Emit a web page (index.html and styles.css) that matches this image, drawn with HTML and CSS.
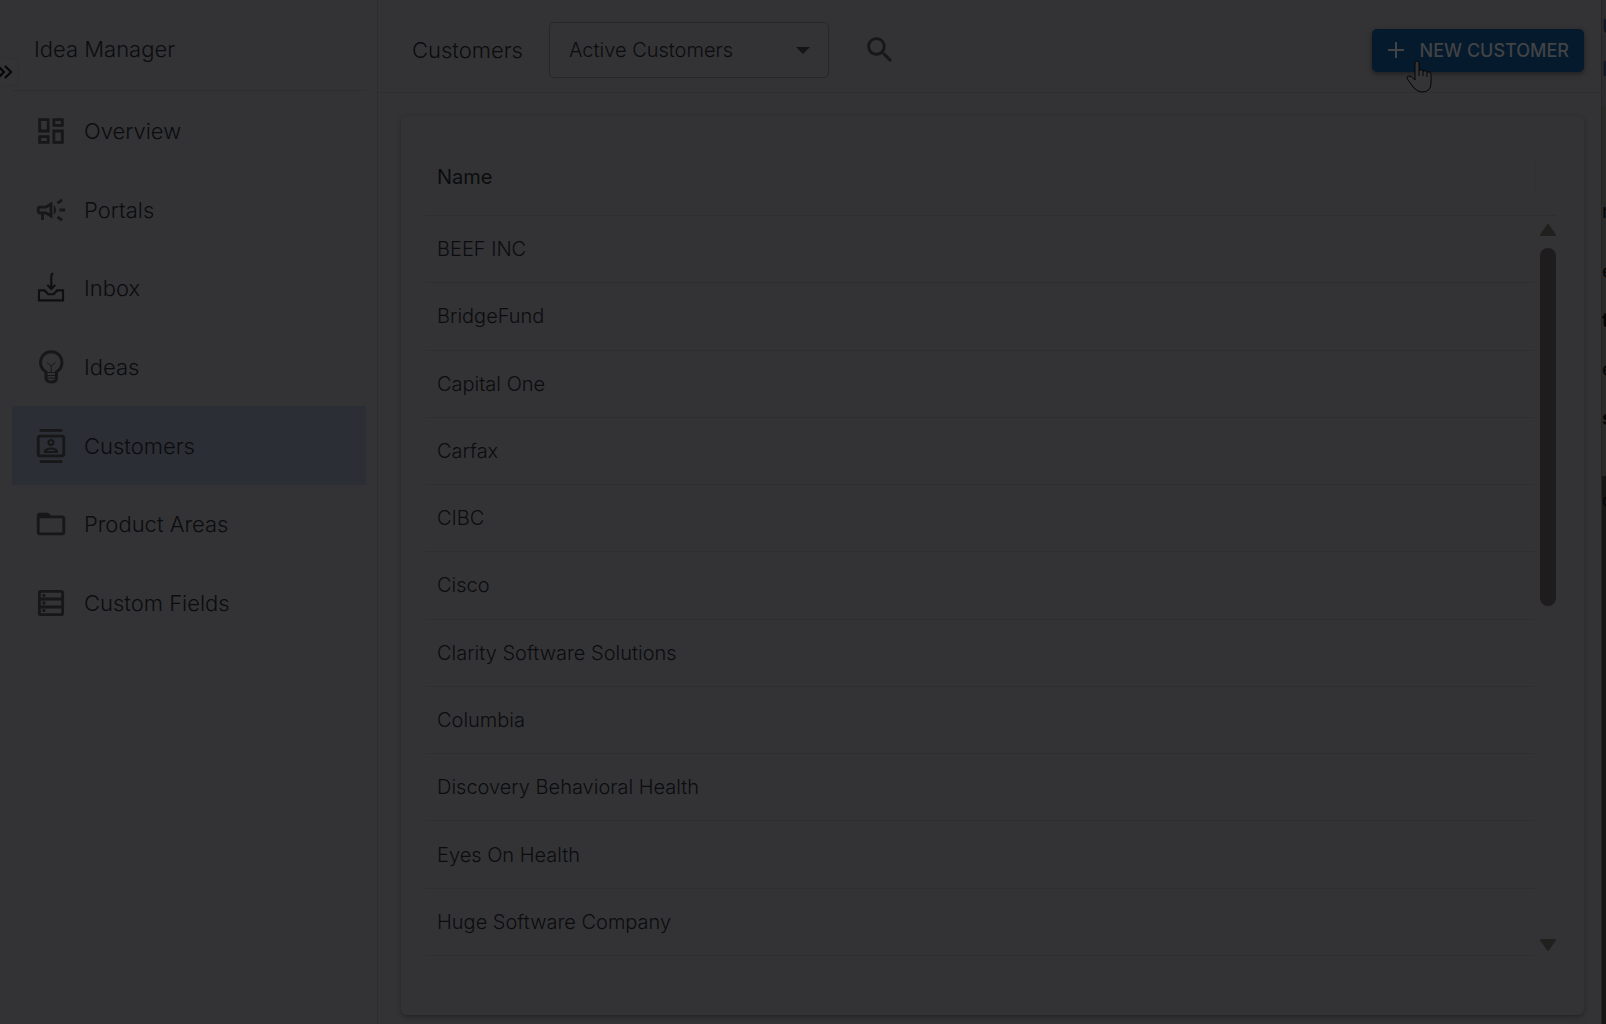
FILE: index.html
```html
<!DOCTYPE html>
<html lang="en">
<head>
<meta charset="utf-8">
<title>Idea Manager - Customers</title>
<link rel="stylesheet" href="styles.css">
</head>
<body>
<div class="app">
  <aside class="sidebar">
    <h1 class="sidebar-title">Idea Manager</h1>
    <button class="expand" aria-label="Expand menu">
      <svg width="18" height="18" viewBox="0 0 18 18"><path d="M-1 3l6 6-6 6M6 3l6 6-6 6"/></svg>
    </button>
    <nav class="nav">
      <a class="nav-item" href="#"><svg class="icon" viewBox="0 0 24 24"><path d="M19 5v2h-4V5h4M9 5v6H5V5h4m10 8v6h-4v-6h4M9 17v2H5v-2h4M21 3h-8v6h8V3zM11 3H3v10h8V3zm10 8h-8v10h8V11zm-10 4H3v6h8v-6z"/></svg>Overview</a>
      <a class="nav-item" href="#"><svg class="icon" viewBox="0 0 24 24"><path d="M18 11v2h4v-2h-4zm-2 6.610c.96.71 2.210 1.650 3.200 2.390.4-.53.8-1.070 1.200-1.600-.99-.74-2.240-1.680-3.200-2.400-.4.540-.8 1.080-1.200 1.610zM20.400 5.600c-.4-.53-.8-1.070-1.200-1.600-.99.740-2.240 1.680-3.200 2.400.4.530.8 1.070 1.200 1.600.96-.72 2.210-1.650 3.200-2.400zM4 9c-1.100 0-2 .9-2 2v2c0 1.100.9 2 2 2h1v4h2v-4h1l5 3V6L8 9H4zm5.030 1.710L11 9.530v4.940l-1.970-1.180-.48-.29H4v-2h4.550l.48-.29zM15.500 12c0-1.330-.58-2.530-1.500-3.350v6.690c.92-.81 1.500-2.010 1.500-3.340z"/></svg>Portals</a>
      <a class="nav-item" href="#"><svg class="icon icon-line" viewBox="0 0 24 24"><path d="M13.600 1.800q-1.400.3-1.400 2V12M9.400 9.800l2.800 2.900 2.800-2.900M3.500 13.700h4l2.500 2.700h3.800l2.500-2.700h4.200v7h-17z"/></svg>Inbox</a>
      <a class="nav-item" href="#"><svg class="icon icon-bulb" viewBox="0 0 34 34"><path class="thick" d="M12 25v-3.200a10.700 10.700 0 1 1 10.500 0V28q0 4-5.200 4T12 28z"/><path d="M12 22.500h10.500M13 25.500h8M13 28h8M13 12.500l4.200 3.500 4.200-3.500M17.200 16v6"/></svg>Ideas</a>
      <a class="nav-item active" href="#"><svg class="icon" viewBox="0 0 24 24"><path d="M20 4H4c-1.100 0-2 .9-2 2v12c0 1.100.9 2 2 2h16c1.100 0 2-.9 2-2V6c0-1.100-.9-2-2-2zm0 14H4V6h16v12zM4 0h16v2H4zm0 22h16v2H4zm8-10a2.500 2.500 0 0 0 0-5 2.500 2.500 0 0 0 0 5zm0-3.500c.55 0 1 .45 1 1s-.45 1-1 1-1-.45-1-1 .45-1 1-1zm5 7.490C17 13.900 13.690 13 12 13s-5 .9-5 2.990V17h10v-1.010zm-8.190-.49c.61-.52 2.030-1 3.190-1 1.170 0 2.590.48 3.200 1H8.810z"/></svg>Customers</a>
      <a class="nav-item" href="#"><svg class="icon" viewBox="0 0 24 24"><path d="M20 6h-8l-2-2H4c-1.100 0-1.990.9-1.990 2L2 18c0 1.100.9 2 2 2h16c1.100 0 2-.9 2-2V8c0-1.100-.9-2-2-2zm0 12H4V8h16v10z"/></svg>Product Areas</a>
      <a class="nav-item" href="#"><svg class="icon icon-list" viewBox="0 0 24 24"><rect x="3.800" y="3.800" width="16.400" height="16.400" rx="1"/><path d="M4 9.200h16M4 14.800h16M6 6.600h2M6 12h2M6 17.400h2"/></svg>Custom Fields</a>
    </nav>
  </aside>
  <main class="main">
    <header class="topbar">
      <h2 class="page-title">Customers</h2>
      <div class="select-wrap">
        <select class="filter" aria-label="Customer filter"><option>Active Customers</option></select>
        <svg class="caret" width="14" height="7" viewBox="0 0 14 7"><path d="M0 0h14L7 7z"/></svg>
      </div>
      <button class="search" aria-label="Search"><svg class="icon-search" viewBox="0 0 24 24"><path d="M15.500 14h-.79l-.28-.27C15.410 12.590 16 11.110 16 9.500 16 5.910 13.090 3 9.500 3S3 5.910 3 9.500 5.910 16 9.500 16c1.610 0 3.090-.59 4.230-1.570l.27.28v.79l5 4.990L20.490 19l-4.990-5zm-6 0C7.010 14 5 11.990 5 9.500S7.010 5 9.500 5 14 7.010 14 9.500 11.990 14 9.500 14z"/></svg></button>
      <button class="new-customer"><svg width="16" height="16" viewBox="0 0 16 16"><path d="M8 0v16M0 8h16"/></svg>NEW CUSTOMER
        <svg class="pointer" width="26" height="33" viewBox="0 0 26 33"><path d="M9 20V3q0-2 2-2t2 2v7q4-1 4 1 4-1 4 1 4-1 4 2v9q0 9-9 9-4 0-8-4l-6-8q-2-3 0-4 3-1 7 4M13 10v6M17 11v5M21 12v5"/></svg>
      </button>
    </header>
    <section class="card">
      <table class="customers">
        <thead><tr><th scope="col">Name</th></tr></thead>
        <tbody>
          <tr><td>BEEF INC</td></tr>
          <tr><td>BridgeFund</td></tr>
          <tr><td>Capital One</td></tr>
          <tr><td>Carfax</td></tr>
          <tr><td>CIBC</td></tr>
          <tr><td>Cisco</td></tr>
          <tr><td>Clarity Software Solutions</td></tr>
          <tr><td>Columbia</td></tr>
          <tr><td>Discovery Behavioral Health</td></tr>
          <tr><td>Eyes On Health</td></tr>
          <tr><td>Huge Software Company</td></tr>
        </tbody>
      </table>
      <div class="rail">
        <div class="rail-head"><div class="separator"></div></div>
        <div class="scrollbar">
          <svg width="16" height="12" viewBox="0 0 16 12"><path d="M8 1l7 10H1z"/></svg>
          <div class="thumb"></div>
          <svg class="down" width="16" height="12" viewBox="0 0 16 12"><path d="M8 11L1 1h14z"/></svg>
        </div>
      </div>
    </section>
  </main>
  <div class="behind">
    <div class="behind-head"><span>U</span><span>I</span></div>
    <div class="behind-page"><span>n</span><span>e</span><b>t</b><span>e</span><b>s</b></div>
    <div class="behind-foot"><span>c</span></div>
  </div>
</div>
</body>
</html>
```
FILE: styles.css
```css
* { box-sizing: border-box; }
body {
  margin: 0;
  background: #333335;
  color: #0b0c0e;
  font-family: Inter, "Liberation Sans", sans-serif;
  font-optical-sizing: none;
  font-weight: 300;
  font-size: 20px;
}
button, select { font: inherit; color: inherit; }
.app { display: flex; min-height: 100vh; overflow: hidden; }
.sidebar {
  position: relative;
  flex: none;
  width: 378px;
  padding: 0 11px 0 12px;
  border-right: 1px solid #2d2d2f;
}
.sidebar-title {
  height: 91px;
  margin: 0;
  padding: 35px 22px 0;
  border-bottom: 1px solid #2e2e2f;
  font-size: 22px;
  line-height: 28px;
  font-weight: 300;
}
.expand {
  position: absolute;
  left: -8px;
  top: 57px;
  width: 27px;
  height: 30px;
  padding: 0 0 0 6px;
  border: 1px solid #303031;
  border-radius: 8px;
  background: #333335;
}
.expand svg { display: block; fill: none; stroke: #050505; stroke-width: 2; }
.nav { display: grid; grid-template-rows: repeat(7, 1fr); height: 551px; padding-top: 1px; }
.nav-item {
  display: flex;
  align-items: center;
  gap: 16px;
  padding-left: 22px;
  color: inherit;
  font-size: 22px;
  text-decoration: none;
}
.nav-item.active { background: #2b2e35; }
.icon { flex: none; width: 34px; height: 34px; fill: #171718; }
.icon-line { fill: none; stroke: #0f0f10; stroke-width: 1.500; }
.icon-list { fill: none; stroke: #171718; stroke-width: 2; }
.icon-bulb { fill: none; stroke: #171718; stroke-width: 1; overflow: visible; }
.icon-bulb .thick { stroke-width: 3; }
.main { flex: 1; min-width: 0; display: flex; flex-direction: column; }
.topbar {
  display: flex;
  align-items: center;
  height: 93px;
  padding: 8px 17px 0 34px;
  border-bottom: 1px solid #2e2e2e;
}
.page-title { width: 114px; margin: 0 23px 0 0; font-size: 22px; font-weight: 300; }
.select-wrap { display: flex; align-items: center; width: 280px; position: relative; }
.filter {
  width: 100%;
  height: 56px;
  padding: 0 19px;
  border: 1px solid #272729;
  border-radius: 5px;
  background: transparent;
  appearance: none;
}
.caret { position: absolute; right: 19px; fill: #141415; }
.search { margin-left: 34px; padding: 0; border: 0; background: none; }
.icon-search { display: block; width: 34px; height: 34px; fill: #171718; }
.new-customer {
  position: relative;
  display: flex;
  align-items: center;
  gap: 16px;
  height: 43px;
  margin-left: auto;
  padding: 0 15px 0 16px;
  border: 0;
  border-radius: 5px;
  background: #061a2d;
  box-shadow: 0 2px 5px #202021;
  color: #414345;
  font-size: 18px;
  font-weight: 500;
}
.new-customer svg { fill: none; stroke: #414345; stroke-width: 2; }
.new-customer .pointer { position: absolute; left: 34px; top: 31px; fill: #343436; stroke: #050505; stroke-width: 1; }
.card {
  flex: 1;
  display: flex;
  margin: 23px 17px 9px 23px;
  padding: 0 28px 59px 25px;
  border-radius: 6px;
  box-shadow: 0 2px 4px #252525;
}
.customers { flex: 1; border-collapse: separate; border-spacing: 0; height: 840px; }
.customers th, .customers td {
  padding: 0 11px;
  border-bottom: 1px solid #2e2e2f;
  text-align: left;
  vertical-align: middle;
}
.customers th { height: 100px; padding-top: 22px; font-weight: 400; }
.rail { display: flex; flex-direction: column; width: 22px; }
.rail-head { height: 100px; padding-top: 44px; border-bottom: 1px solid #2e2e2f; }
.separator { width: 1px; height: 32px; background: #2f2f30; }
.scrollbar { flex: 1; display: flex; flex-direction: column; align-items: flex-end; padding: 8px 0 5px; }
.scrollbar svg { fill: #20201f; stroke: #20201f; stroke-width: 2; stroke-linejoin: round; }
.thumb { width: 16px; height: 358px; margin-top: 12px; border-radius: 8px; background: #1f1c1d; }
.down { margin-top: auto; }
.behind {
  flex: none;
  display: flex;
  flex-direction: column;
  width: 5px;
  overflow: hidden;
  border-left: 1px solid #262526;
  color: #060606;
  font-weight: 400;
}
.behind span, .behind b { display: block; line-height: 49px; }
.behind-head { height: 106px; padding-top: 6px; background: #2f2c30; color: #0d1524; }
.behind-head span { line-height: 42px; }
.behind-page { height: 370px; padding-top: 81px; background: #2b2b29; }
.behind-page span:first-child { margin-bottom: 11px; }
.behind-foot { flex: 1; background: #171716; }
```
